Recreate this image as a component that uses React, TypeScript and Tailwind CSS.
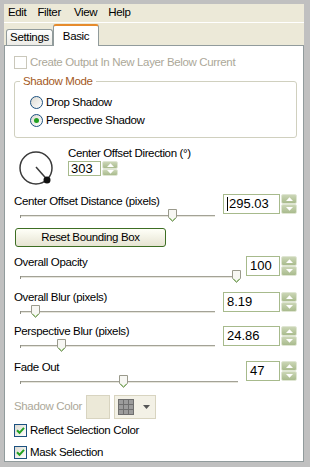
import React from "react";

const LBL = "font-['Liberation_Sans',Arial,sans-serif] text-[11.5px] tracking-[-0.35px]";
const NUM = "font-['Liberation_Sans',Arial,sans-serif] text-[13px] tracking-normal";

function Thumb() {
  return (
    <svg width="9" height="13" viewBox="0 0 9 13" className="block">
      <path d="M0.5 0.5H8.5V8.5L4.5 12.5L0.5 8.5Z" fill="#f7f7f3" stroke="#9a9a8c" />
      <path d="M1.5 9L4.5 11.8L7.5 9" fill="none" stroke="#6aae45" strokeWidth="1" />
    </svg>
  );
}

function Slider({ thumb }: { thumb: number }) {
  return (
    <div className="relative h-[14px] ml-[6px]">
      <div className="absolute left-0 right-0 top-[6px] h-[3px] border-t border-t-[#a3a296] border-b border-b-white bg-[#e6e5dc]" />
      <div className="absolute left-0 top-[6px] w-px h-[3px] bg-[#8f8e84]" />
      <div className="absolute top-0" style={{ left: thumb }}>
        <Thumb />
      </div>
    </div>
  );
}

function SpinBtn({ up }: { up?: boolean }) {
  return (
    <div className="flex-1 flex items-center justify-center rounded-[2px] border border-[#dfe6d3] bg-gradient-to-b from-[#cbd6b6] to-[#a9bb8d]">
      <svg width="7" height="4" viewBox="0 0 7 4" className="block">
        <path d={up ? "M0 4L3.5 0.3L7 4Z" : "M0 0L3.5 3.7L7 0Z"} fill="white" />
      </svg>
    </div>
  );
}

function Spins({ small }: { small?: boolean }) {
  return (
    <div className={small ? "ml-px flex flex-col w-[16px] h-[15px]" : "ml-px flex flex-col w-[16px] h-[20px]"}>
      <SpinBtn up />
      <SpinBtn />
    </div>
  );
}

function NumBox({ value, wide, caret }: { value: string; wide?: boolean; caret?: boolean }) {
  return (
    <div className="flex">
      <div
        className={
          (wide ? "w-[57px] " : "w-[34px] ") +
          "h-[20px] border border-[#a7ba8c] bg-white flex items-center pl-[3px] text-black " +
          NUM
        }
      >
        {caret && <span className="inline-block w-px h-[14px] bg-black mr-px" />}
        {value}
      </div>
      <Spins />
    </div>
  );
}

function SliderRow({
  label,
  value,
  wide,
  thumb,
  mt,
  boxMt,
  caret,
}: {
  label: string;
  value: string;
  wide?: boolean;
  thumb: number;
  mt: string;
  boxMt: string;
  caret?: boolean;
}) {
  return (
    <div className={"flex " + mt}>
      <div className="flex-1 flex flex-col">
        <div className="h-[15px] leading-[15px]">{label}</div>
        <Slider thumb={thumb} />
      </div>
      <div className={"ml-[8px] " + boxMt}>
        <NumBox value={value} wide={wide} caret={caret} />
      </div>
    </div>
  );
}

function CheckBox({ checked, disabled }: { checked?: boolean; disabled?: boolean }) {
  return (
    <div
      className={
        "shrink-0 w-[13px] h-[13px] border flex items-center justify-center " +
        (disabled ? "border-[#cac8bb] bg-white" : "border-[#1c5180] bg-gradient-to-br from-[#dcdad2] to-white")
      }
    >
      {checked && (
        <svg width="9" height="9" viewBox="0 0 9 9" className="block">
          <path d="M1 4.2L3.5 6.8L8 1.8" fill="none" stroke="#21a121" strokeWidth="2" />
        </svg>
      )}
    </div>
  );
}

function Radio({ checked }: { checked?: boolean }) {
  return (
    <div className="shrink-0 w-[13px] h-[13px] rounded-full border border-[#1c5180] bg-gradient-to-br from-[#dcdad2] to-white flex items-center justify-center">
      {checked && <div className="w-[5px] h-[5px] rounded-full bg-[#21a121]" />}
    </div>
  );
}

function GridIcon() {
  return (
    <svg width="16" height="16" viewBox="0 0 16 16" className="block">
      <rect x="0" y="0" width="16" height="16" fill="#6f6f6f" />
      {[0, 1, 2].map((r) =>
        [0, 1, 2].map((c) => (
          <rect key={r + "-" + c} x={1 + c * 5} y={1 + r * 5} width="4" height="4" fill="#9c9c9c" />
        ))
      )}
    </svg>
  );
}

export default function App() {
  return (
    <div className={"w-[310px] h-[467px] bg-[#c0c0c0] pt-[4px] pl-[4px] pr-[6px] pb-[5px] text-black " + LBL}>
      <div className="h-full flex flex-col bg-[#ece9d8]">
        {/* menu bar */}
        <div className="h-[18px] flex items-center pl-[4px]">
          <span>Edit</span>
          <span className="ml-[11px]">Filter</span>
          <span className="ml-[13px]">View</span>
          <span className="ml-[11px]">Help</span>
        </div>
        <div className="h-px bg-white" />
        {/* tabs */}
        <div className="h-[22px] flex items-end pl-[2px]">
          <div className="w-[47px] h-[16px] border border-b-0 border-[#919b9c] rounded-t-[3px] bg-gradient-to-b from-white to-[#ecebe6] flex items-center justify-center pt-px">
            Settings
          </div>
          <div className="relative z-10 -mb-px w-[46px] h-[22px] border-x border-[#919b9c] border-t-2 border-t-[#e68b2c] rounded-t-[3px] bg-white flex items-start justify-center pt-[2px]">
            Basic
          </div>
        </div>
        {/* panel */}
        <div className="flex-1 bg-white border border-[#919b9c] pl-[9px] pr-[6px] pt-[10px] flex flex-col">
          <div className="h-[13px] flex items-center">
            <CheckBox disabled />
            <span className="ml-[3px] text-[#aca899] whitespace-nowrap">Create Output In New Layer Below Current</span>
          </div>

          {/* group box */}
          <div className="relative mt-[12px] border border-[#d0d0bf] rounded-[3px] pl-[15px] pt-[14px] pb-[10px]">
            <div className="absolute -top-[8px] left-[5px] px-[3px] bg-white leading-[15px] text-[#a45a1e]">Shadow Mode</div>
            <div className="h-[13px] flex items-center">
              <Radio />
              <span className="ml-[3px]">Drop Shadow</span>
            </div>
            <div className="h-[13px] mt-[5px] flex items-center">
              <Radio checked />
              <span className="ml-[3px]">Perspective Shadow</span>
            </div>
          </div>

          {/* dial */}
          <div className="mt-[8px] h-[48px] flex">
            <svg width="54" height="44" viewBox="0 0 54 44" className="block shrink-0">
              <circle cx="22" cy="22" r="16" fill="none" stroke="#3a3a3a" strokeWidth="1.5" />
              <line x1="22" y1="21" x2="33" y2="33.5" stroke="#3a3a3a" strokeWidth="1.5" />
              <circle cx="33" cy="34" r="3.5" fill="#111" />
            </svg>
            <div className="flex flex-col">
              <div className="h-[15px] leading-[15px] whitespace-nowrap">Center Offset Direction (°)</div>
              <div className="flex">
                <div className={"w-[33px] h-[15px] border border-[#a7ba8c] bg-white flex items-center pl-[2px] " + NUM}>303</div>
                <Spins small />
              </div>
            </div>
          </div>

          <SliderRow label="Center Offset Distance (pixels)" value="295.03" wide thumb={148} mt="mt-0" boxMt="mt-0" caret />

          <div className="mt-[5px] ml-px w-[151px] h-[19px] border border-[#3d6e23] rounded-[3px] bg-gradient-to-b from-[#fffff8] to-[#e6e4d2] flex items-center justify-center">
            Reset Bounding Box
          </div>

          <SliderRow label="Overall Opacity" value="100" thumb={212} mt="mt-[8px]" boxMt="mt-px" />
          <SliderRow label="Overall Blur (pixels)" value="8.19" wide thumb={11} mt="mt-[6px]" boxMt="mt-[2px]" />
          <SliderRow label="Perspective Blur (pixels)" value="24.86" wide thumb={37} mt="mt-[5px]" boxMt="mt-[2px]" />
          <SliderRow label="Fade Out" value="47" thumb={99} mt="mt-[7px]" boxMt="mt-px" />

          <div className="mt-[6px] h-[24px] flex items-center">
            <span className="text-[#aca899] w-[72px] whitespace-nowrap">Shadow Color</span>
            <div className="w-[24px] h-[24px] border border-[#d8d4c0] bg-[#ece9d8]" />
            <div className="ml-[4px] w-[42px] h-[24px] border border-[#d8d4c0] bg-[#f3f1e6] flex items-center pl-[3px]">
              <GridIcon />
              <svg width="7" height="4" viewBox="0 0 7 4" className="block ml-[9px]">
                <path d="M0 0L3.5 4L7 0Z" fill="#555" />
              </svg>
            </div>
          </div>

          <div className="mt-[5px] h-[13px] flex items-center">
            <CheckBox checked />
            <span className="ml-[3px]">Reflect Selection Color</span>
          </div>
          <div className="mt-[9px] h-[13px] flex items-center">
            <CheckBox checked />
            <span className="ml-[3px]">Mask Selection</span>
          </div>
        </div>
      </div>
    </div>
  );
}
